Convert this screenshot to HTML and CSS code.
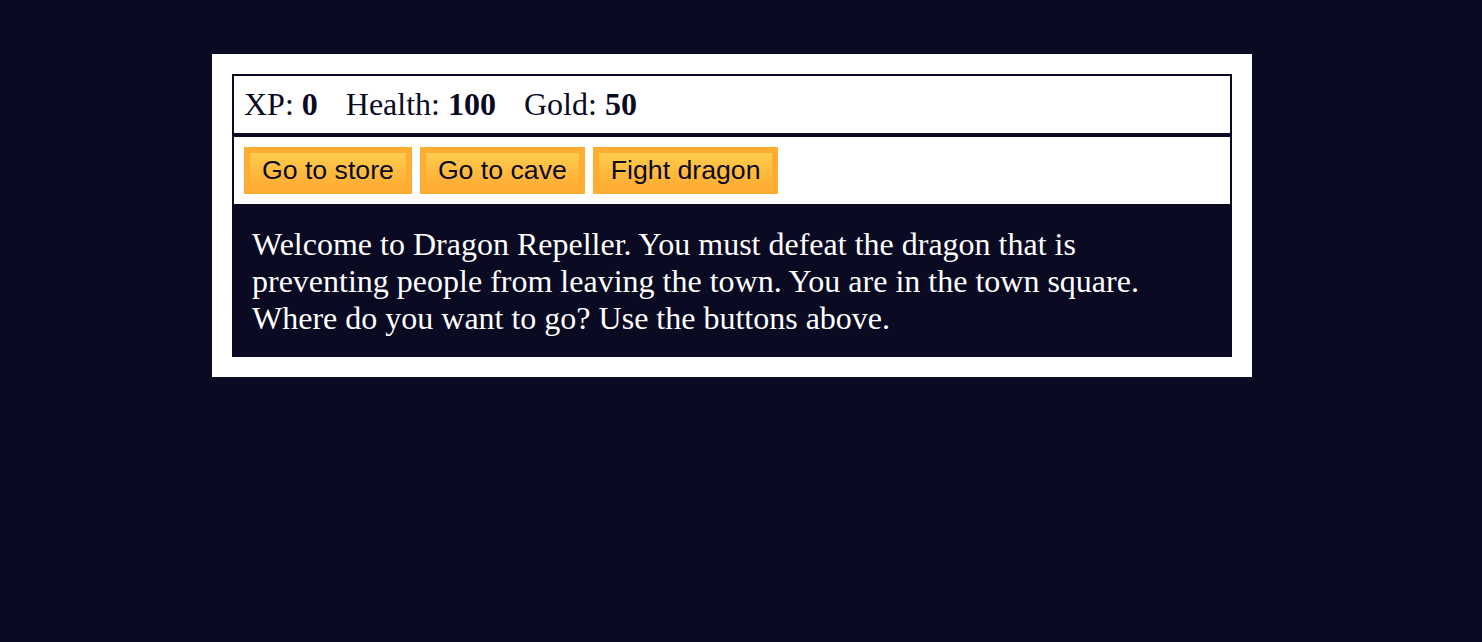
FILE: index.html
```html
<!DOCTYPE html>
<html lang="en">
<head>
<meta charset="utf-8">
<title>RPG - Dragon Repeller</title>
<link rel="stylesheet" href="styles.css">
</head>
<body>
<div class="game">
  <div class="stats">
    <span class="stat">XP: <strong>0</strong></span>
    <span class="stat">Health: <strong>100</strong></span>
    <span class="stat">Gold: <strong>50</strong></span>
  </div>
  <div class="controls">
    <button class="btn">Go to store</button>
    <button class="btn">Go to cave</button>
    <button class="btn">Fight dragon</button>
  </div>
  <div class="text">
    Welcome to Dragon Repeller. You must defeat the dragon that is preventing people from leaving the town. You are in the town square. Where do you want to go? Use the buttons above.
  </div>
</div>
</body>
</html>
```

FILE: styles.css
```css
html, body {
  margin: 0;
  background-color: #0a0a23;
}
body {
  padding: 0 18px 0 0;
  font-family: "Liberation Serif", "Times New Roman", serif;
  font-size: 32px;
}
.game {
  max-width: 1000px;
  background-color: #ffffff;
  color: #ffffff;
  margin: 54px auto 0;
  padding: 20px;
}
.stats, .controls {
  border: 2px solid #0a0a23;
  padding: 10px;
  color: #0a0a23;
}
.stat {
  padding-right: 20px;
}
.btn {
  cursor: pointer;
  font-family: "Liberation Sans", Arial, sans-serif;
  font-size: 26.67px;
  padding: 2px 12px;
  margin: 0;
  color: #0a0a23;
  background-color: #feac32;
  background-image: linear-gradient(#fecc4c, #ffac33);
  border: 6px solid #feac32;
}
.text {
  background-color: #0a0a23;
  color: #ffffff;
  padding: 20px;
}
```
